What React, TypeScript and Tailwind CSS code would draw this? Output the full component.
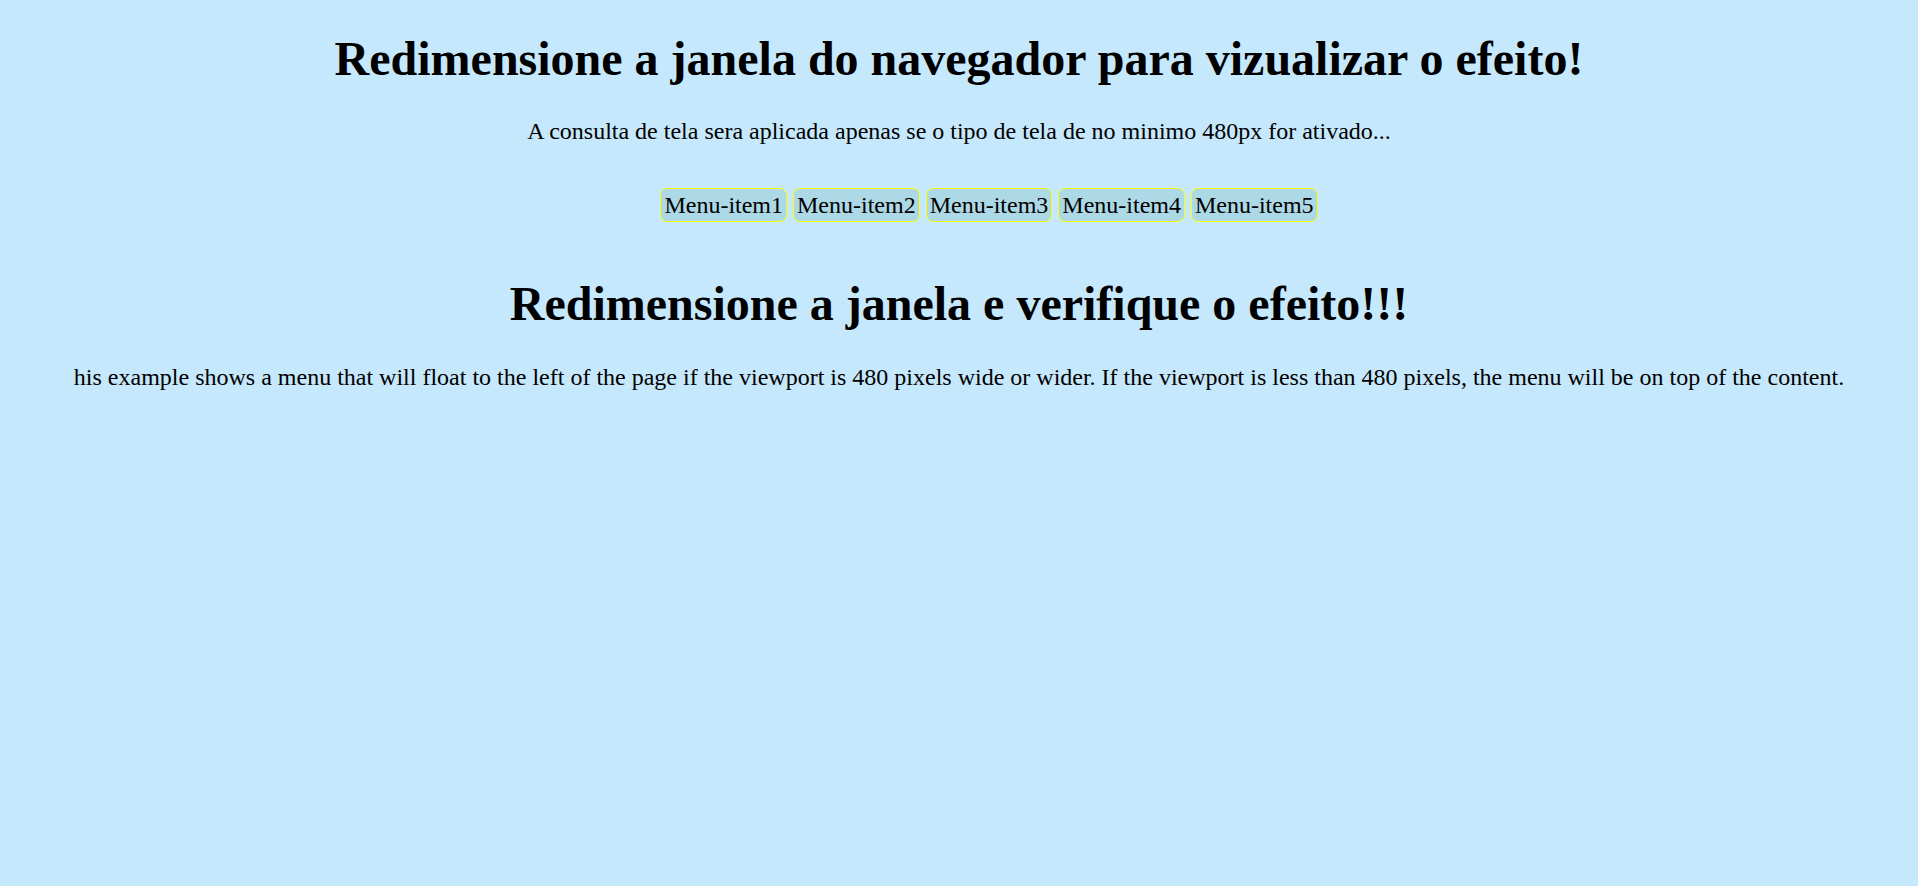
export default function App() {
  const items = ["Menu-item1", "Menu-item2", "Menu-item3", "Menu-item4", "Menu-item5"];
  return (
    <div
      className="min-h-screen w-full bg-[#c6e8fc] text-black text-center"
      style={{ fontFamily: '"Liberation Serif", "Times New Roman", serif' }}
    >
      <div className="pt-[32px]">
        <h1 className="text-[48px] font-bold leading-[53px]">
          Redimensione a janela do navegador para vizualizar o efeito!
        </h1>
        <p className="mt-[33px] text-[24px] leading-[27px]">
          A consulta de tela sera aplicada apenas se o tipo de tela de no minimo 480px for ativado...
        </p>
        <ul className="mt-[43px] pl-[60px] flex justify-center gap-[6px]">
          {items.map((it) => (
            <li
              key={it}
              className="border-[1.5px] border-[#ffff00] bg-[#add8e6] rounded-[7px] px-[3px] py-[2.5px] text-[24px] leading-[27px]"
            >
              {it}
            </li>
          ))}
        </ul>
        <h2 className="mt-[55px] text-[48px] font-bold leading-[53px]">
          Redimensione a janela e verifique o efeito!!!
        </h2>
        <p className="mt-[34px] text-[24px] leading-[27px]">
          his example shows a menu that will float to the left of the page if the viewport is 480 pixels wide or wider. If the viewport is less than 480 pixels, the menu will be on top of the content.
        </p>
      </div>
    </div>
  );
}
